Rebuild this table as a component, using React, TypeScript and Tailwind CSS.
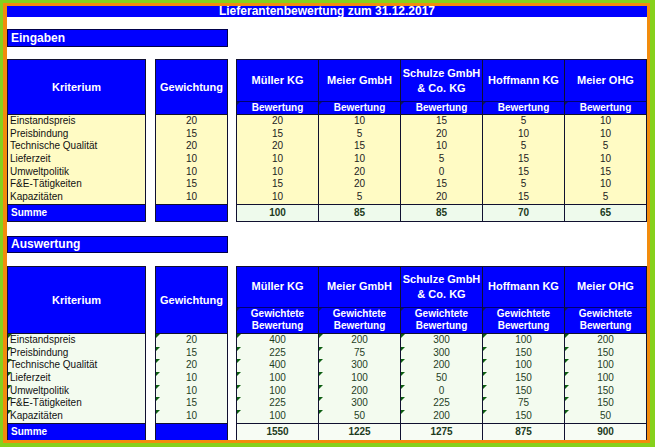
import React from "react";

const criteria = [
  "Einstandspreis",
  "Preisbindung",
  "Technische Qualität",
  "Lieferzeit",
  "Umweltpolitik",
  "F&E-Tätigkeiten",
  "Kapazitäten",
];
const weights = [20, 15, 20, 10, 10, 15, 10];

const suppliers = [
  { name: ["Müller KG"], scores: [20, 15, 20, 10, 10, 15, 10] },
  { name: ["Meier GmbH"], scores: [10, 5, 15, 10, 20, 20, 5] },
  { name: ["Schulze GmbH", "& Co. KG"], scores: [15, 20, 10, 5, 0, 15, 20] },
  { name: ["Hoffmann KG"], scores: [5, 10, 5, 15, 15, 5, 15] },
  { name: ["Meier OHG"], scores: [10, 10, 5, 10, 15, 10, 5] },
];

function Tri() {
  return <span className="absolute left-0 top-0 h-0 w-0 border-t-[4px] border-r-[4px] border-t-[#0d5e12] border-r-transparent" />;
}

function SectionBar({ title, className = "" }: { title: string; className?: string }) {
  return (
    <div className={`w-[221px] bg-[#0000ff] border border-[#00004a] text-white text-[12px] font-bold pl-[3px] ${className}`}>
      {title}
    </div>
  );
}

function Table({ weighted }: { weighted: boolean }) {
  const headH = weighted ? "h-[66px]" : "h-[54px]";
  const nameH = weighted ? "h-[40px]" : "h-[41px]";
  const subH = weighted ? "h-[26px]" : "h-[13px]";
  const bodyBg = weighted ? "bg-[#f3fbef]" : "bg-[#fffbc4]";
  const numCol = weighted ? "text-[#1f3f1f]" : "text-[#222]";
  const sumBg = weighted ? "bg-[#f7fcf4]" : "bg-[#eefaec]";

  return (
    <div className="flex text-[10px]">
      {/* Kriterium */}
      <div className="w-[139px] flex flex-col border border-[#101030]">
        <div className={`${headH} bg-[#0000ff] text-white font-bold text-[11px] flex items-center justify-center`}>Kriterium</div>
        <div className={`${bodyBg} border-t border-[#101030]`}>
          {criteria.map((c) => (
            <div key={c} className="relative h-[12.7px] leading-[12.7px] pl-[2px] text-[#111]">
              {weighted && <Tri />}
              {c}
            </div>
          ))}
        </div>
        <div className="h-[17px] bg-[#0000ff] border-t border-[#101030] text-white font-bold leading-[16px] pl-[3px]">Summe</div>
      </div>

      {/* Gewichtung */}
      <div className="ml-[9px] w-[73px] flex flex-col border border-[#101030]">
        <div className={`${headH} bg-[#0000ff] text-white font-bold text-[11px] flex items-center justify-center`}>Gewichtung</div>
        <div className={`${bodyBg} border-t border-[#101030]`}>
          {weights.map((w, i) => (
            <div key={i} className={`relative h-[12.7px] leading-[12.7px] text-center ${numCol}`}>
              {weighted && <Tri />}
              {w}
            </div>
          ))}
        </div>
        <div className="h-[17px] bg-[#0000ff] border-t border-[#101030]" />
      </div>

      {/* Lieferanten */}
      <div className="ml-[8px] w-[411px] flex border border-[#101030]">
        {suppliers.map((s, si) => {
          const sum = s.scores.reduce((a, v, i) => a + (weighted ? v * weights[i] : v), 0);
          return (
            <div key={si} className={`flex-1 flex flex-col ${si > 0 ? "border-l border-[#101030]" : ""}`}>
              <div className={`${nameH} bg-[#0000ff] text-white font-bold text-[11px] leading-[15px] flex flex-col items-center justify-center`}>
                {s.name.map((n) => (
                  <span key={n}>{n}</span>
                ))}
              </div>
              <div className={`${subH} relative bg-[#0000ff] border-t border-[#000070] text-white font-bold text-[10px] leading-[12px] flex flex-col items-center justify-center`}>
                <span className="absolute left-0 top-0 h-0 w-0 border-t-[3px] border-r-[3px] border-t-[#0a1a5a] border-r-transparent" />
                {weighted && <span>Gewichtete</span>}
                <span>Bewertung</span>
              </div>
              <div className={`${bodyBg} border-t border-[#101030]`}>
                {s.scores.map((v, i) => (
                  <div key={i} className={`relative h-[12.7px] leading-[12.7px] text-center ${numCol}`}>
                    {weighted && <Tri />}
                    {weighted ? v * weights[i] : v}
                  </div>
                ))}
              </div>
              <div className={`h-[17px] ${sumBg} border-t border-[#101030] text-center font-bold text-[#1d3b1d] leading-[16px]`}>{sum}</div>
            </div>
          );
        })}
      </div>
    </div>
  );
}

export default function App() {
  return (
    <div className="w-[655px] h-[447px] bg-[#86d11c] pt-[3px] pl-[3px] pr-[5px] pb-[4px] font-['Liberation_Sans',Arial,sans-serif]">
      <div className="h-full border-t-[3px] border-l-[4px] border-r-[3px] border-b-[3px] border-[#f28c0c] bg-white overflow-hidden flex flex-col">
        <div className="h-[11px] shrink-0 bg-[#0000ff] overflow-hidden text-center text-white font-bold text-[12px] leading-[12px]">
          <div className="-mt-[1px]">Lieferantenbewertung zum 31.12.2017</div>
        </div>

        <SectionBar title="Eingaben" className="mt-[12px] shrink-0 h-[18px] leading-[16px]" />
        <div className="mt-[12px] shrink-0">
          <Table weighted={false} />
        </div>

        <SectionBar title="Auswertung" className="mt-[14px] shrink-0 h-[17px] leading-[15px]" />
        <div className="mt-[13px] shrink-0">
          <Table weighted={true} />
        </div>
      </div>
    </div>
  );
}
